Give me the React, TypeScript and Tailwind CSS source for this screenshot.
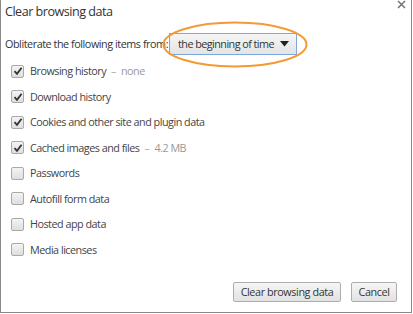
import React from "react";

const items: { label: string; note?: string; checked: boolean }[] = [
  { label: "Browsing history", note: "none", checked: true },
  { label: "Download history", checked: true },
  { label: "Cookies and other site and plugin data", checked: true },
  { label: "Cached images and files", note: "4.2 MB", checked: true },
  { label: "Passwords", checked: false },
  { label: "Autofill form data", checked: false },
  { label: "Hosted app data", checked: false },
  { label: "Media licenses", checked: false },
];

function Box({ checked }: { checked: boolean }) {
  return (
    <div className="w-[13px] h-[13px] border border-[#a9a9a9] rounded-[2px] bg-gradient-to-b from-[#f4f4f4] to-[#dedede] flex items-center justify-center shrink-0">
      {checked && (
        <svg width="10" height="10" viewBox="0 0 10 10">
          <path d="M1.5 5.2 L4 7.8 L8.6 1.8" fill="none" stroke="#333" strokeWidth="1.8" />
        </svg>
      )}
    </div>
  );
}

export default function App() {
  return (
    <div
      className="w-[413px] h-[314px] bg-white relative overflow-hidden"
      style={{ fontFamily: '"Open Sans", "Noto Sans", sans-serif' }}
    >
      <div className="w-[412px] h-[313px] border-l border-r border-b border-[#8a8a8a] relative flex flex-col">
        <svg width="9" height="9" viewBox="0 0 9 9" className="absolute left-[396px] top-[0px]">
          <path d="M1 1 L8 8 M8 1 L1 8" stroke="#777" strokeWidth="1.6" />
        </svg>
        <div className="pl-[4px] pt-[3px] text-[12.6px] tracking-[-0.5px] text-[#333] leading-[18px]">Clear browsing data</div>
        <div className="flex items-center mt-[12px] pl-[4px] h-[22px]">
          <span className="text-[10.8px] tracking-[-0.45px] text-[#333] whitespace-nowrap">Obliterate the following items from:</span>
          <div className="ml-[1px] w-[128px] h-[22px] border border-[#7ea6e0] bg-gradient-to-b from-[#f6f6f6] to-[#e4e4e4] flex items-center pl-[8px] text-[10.8px] tracking-[-0.55px] text-[#333] whitespace-nowrap">
            <span className="flex-1">the beginning of time</span>
            <svg width="9" height="6" viewBox="0 0 9 6" className="mr-[7px] shrink-0">
              <path d="M0 0 H9 L4.5 5.5 Z" fill="#222" />
            </svg>
          </div>
        </div>
        <svg
          width="146"
          height="47"
          viewBox="0 0 146 47"
          className="absolute left-[161px] top-[21px] pointer-events-none"
        >
          <ellipse cx="73" cy="23.5" rx="71.5" ry="22" fill="none" stroke="#f39a33" strokeWidth="2" />
        </svg>
        <div className="flex flex-col mt-[3.5px] pl-[10px]">
          {items.map((it) => (
            <div key={it.label} className="flex items-center h-[25.5px]">
              <Box checked={it.checked} />
              <span className="ml-[6px] text-[10.8px] tracking-[-0.5px] text-[#444] whitespace-nowrap">
                {it.label}
                {it.note && (
                  <>
                    <span className="text-[#aaa] ml-[5px]">–</span>
                    <span className="text-[#999] ml-[5px]">{it.note}</span>
                  </>
                )}
              </span>
            </div>
          ))}
        </div>
        <div className="flex-1" />
        <div className="flex justify-end gap-[10px] pr-[14px] pb-[10px]">
          <button className="h-[20px] w-[108px] border border-[#adadad] rounded-[2px] bg-gradient-to-b from-[#f6f6f6] to-[#e2e2e2] text-[10.8px] tracking-[-0.4px] text-[#333] leading-none">
            Clear browsing data
          </button>
          <button className="h-[20px] w-[46px] border border-[#adadad] rounded-[2px] bg-gradient-to-b from-[#f6f6f6] to-[#e2e2e2] text-[10.8px] tracking-[-0.4px] text-[#333] leading-none">
            Cancel
          </button>
        </div>
      </div>
    </div>
  );
}
